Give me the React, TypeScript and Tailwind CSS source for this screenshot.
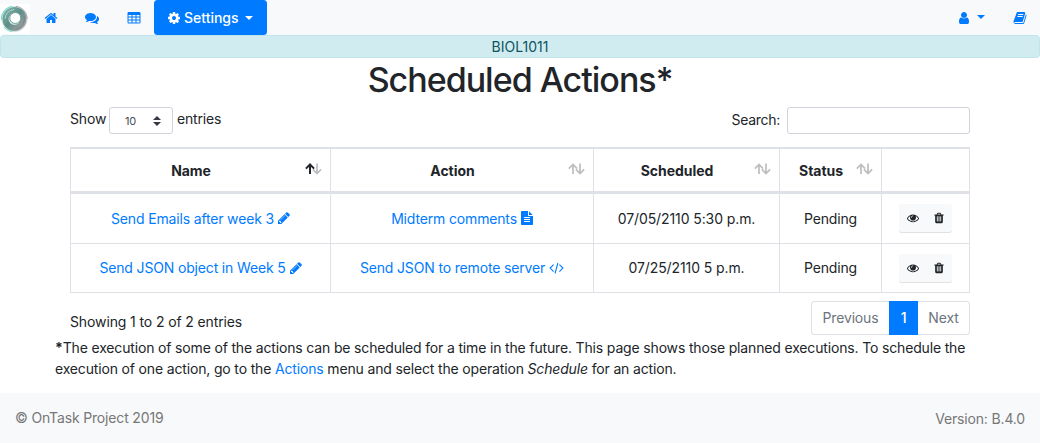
import type { ReactNode } from 'react';

const paths = {
  home: 'M1472 992v480q0 26-19 45t-45 19h-384v-384h-256v384h-384q-26 0-45-19t-19-45v-480q0-1 .5-3t.5-3l575-474 575 474q1 2 1 6zm223-69l-62 74q-8 9-21 11h-3q-13 0-21-7l-692-577-692 577q-12 8-24 7-13-2-21-11l-62-74q-8-10-7-23.500t11-21.500l719-599q32-26 76-26t76 26l244 204v-195q0-14 9-23t23-9h192q14 0 23 9t9 23v408l219 182q10 8 11 21.500t-7 23.500z',
  comments: 'M1408 768q0 139-94 257t-256.500 186.500-353.500 68.500q-86 0-176-16-124 88-278 128-36 9-86 16h-3q-11 0-20.500-8t-11.500-21q-1-3-1-6.500t.5-6.500 2-6l2.500-5 3.500-5.500 4-5 4.500-5 4-4.500q5-6 23-25t26-29.500 22.500-29 25-38.500 20.500-44q-124-72-195-177t-71-224q0-139 94-257t256.500-186.500 353.500-68.500 353.500 68.500 256.500 186.500 94 257zm384 256q0 120-71 224.500t-195 176.500q10 24 20.500 44t25 38.500 22.500 29 26 29.500 23 25q1 1 4 4.500t4.500 5 4 5 3.500 5.500l2.500 5 2 6 .5 6.500-1 6.500q-3 14-13 22t-22 7q-50-7-86-16-154-40-278-128-90 16-176 16-271 0-472-132 58 4 88 4 161 0 309-45t264-129q125-92 192-212t67-254q0-77-23-152 129 71 204 178t75 230z',
  cog: 'M1152 896q0-106-75-181t-181-75-181 75-75 181 75 181 181 75 181-75 75-181zm512-109v222q0 12-8 23t-20 13l-185 28q-19 54-39 91 35 50 107 138 10 12 10 25t-9 23q-27 37-99 108t-94 71q-12 0-26-9l-138-108q-44 23-91 38-16 136-29 186-7 28-36 28h-222q-14 0-24.500-8.500t-11.500-21.500l-28-184q-49-16-90-37l-141 107q-10 9-25 9-14 0-25-11-126-114-165-168-7-10-7-23 0-12 8-23 15-21 51-66.500t54-70.500q-27-50-41-99l-183-27q-13-2-21-12.500t-8-23.500v-222q0-12 8-23t19-13l186-28q14-46 39-92-40-57-107-138-10-12-10-24 0-10 9-23 26-36 98.500-107.500t94.500-71.500q13 0 26 10l138 107q44-23 91-38 16-136 29-186 7-28 36-28h222q14 0 24.500 8.500t11.500 21.500l28 184q49 16 90 37l142-107q9-9 24-9 13 0 25 10 129 119 165 170 7 8 7 22 0 12-8 23-15 21-51 66.500t-54 70.500q26 50 41 98l183 28q13 2 21 12.500t8 23.500z',
  table: 'M224 128H1568Q1728 128 1728 288V1440Q1728 1600 1568 1600H224Q64 1600 64 1440V288Q64 128 224 128zM192 512V704H576V512zM704 512V704H1088V512zM1216 512V704H1600V512zM192 832V1088H576V832zM704 832V1088H1088V832zM1216 832V1088H1600V832zM192 1216V1472H576V1216zM704 1216V1472H1088V1216zM1216 1216V1472H1600V1216z',
  user: 'M1536 1399q0 109-62.500 187t-150.500 78h-854q-88 0-150.500-78t-62.500-187q0-85 8.500-160.500t31.500-152 58.500-131 94-89 134.500-34.500q131 128 313 128t313-128q76 0 134.500 34.500t94 89 58.500 131 31.500 152 8.500 160.500zm-256-887q0 159-112.500 271.500t-271.500 112.500-271.500-112.500-112.500-271.500 112.500-271.500 271.500-112.500 271.500 112.500 112.500 271.500z',
  book: 'M1703 478q40 57 18 129l-275 906q-19 64-76.500 107.500t-122.500 43.500h-923q-77 0-148.500-53.500t-99.500-131.500q-24-67-2-127 0-4 3-27t4-37q1-8-3-21.500t-3-19.500q2-11 8-21t16.500-23.500 16.500-23.500q23-38 45-91.500t30-91.500q3-10 .5-30t-.5-28q3-11 17-28t17-23q21-36 42-92t25-90q1-9-2.500-32t.5-28q4-13 22-30.500t22-22.500q19-26 42.500-84.500t27.500-96.500q1-8-3-25.500t-2-26.500q2-8 9-18t18-23 17-21q8-12 16.500-30.500t15-35 16-36 19.500-32 26.500-23.500 36-11.500 47.500 5.500l-1 3q38-9 51-9h761q74 0 114 56t18 130l-274 906q-36 119-71.500 153.500t-128.500 34.500h-869q-27 0-38 15-11 16-1 43 24 70 144 70h923q29 0 56-15.500t35-41.500l300-987q7-22 5-57 38 15 59 43zm-1064 2q-4 13 2 22.500t20 9.500h608q13 0 25.500-9.500t16.500-22.500l21-64q4-13-2-22.500t-20-9.500h-608q-13 0-25.500 9.500t-16.500 22.500zm-83 256q-4 13 2 22.500t20 9.500h608q13 0 25.500-9.500t16.500-22.500l21-64q4-13-2-22.500t-20-9.500h-608q-13 0-25.500 9.500t-16.500 22.500z',
  pencil: 'M491 1536l91-91-235-235-91 91v107h128v128h107zm523-928q0-22-22-22-10 0-17 7l-542 542q-7 7-7 17 0 22 22 22 10 0 17-7l542-542q7-7 7-17zm-54-192l416 416-832 832h-416v-416zm683 96q0 53-37 90l-166 166-416-416 166-165q36-38 90-38 53 0 91 38l235 234q37 39 37 91z',
  file: 'M1596 476q14 14 28 36h-472v-472q22 14 36 28zm-476 164h544v1056q0 40-28 68t-68 28h-1344q-40 0-68-28t-28-68v-1600q0-40 28-68t68-28h800v544q0 40 28 68t68 28zm160 736v-64q0-14-9-23t-23-9h-704q-14 0-23 9t-9 23v64q0 14 9 23t23 9h704q14 0 23-9t9-23zm0-256v-64q0-14-9-23t-23-9h-704q-14 0-23 9t-9 23v64q0 14 9 23t23 9h704q14 0 23-9t9-23zm0-256v-64q0-14-9-23t-23-9h-704q-14 0-23 9t-9 23v64q0 14 9 23t23 9h704q14 0 23-9t9-23z',
  eye: 'M1664 960q-152-236-381-353 61 104 61 225 0 185-131.500 316.500t-316.500 131.500-316.500-131.500-131.500-316.500q0-121 61-225-229 117-381 353 133 205 333.500 326.500t434.500 121.500 434.500-121.500 333.500-326.500zm-720-384q0-20-14-34t-34-14q-125 0-214.500 89.500t-89.500 214.500q0 20 14 34t34 14 34-14 14-34q0-86 61-147t147-61q20 0 34-14t14-34zm848 384q0 34-20 69-140 230-376.500 368.500t-499.500 138.500-499.500-139-376.500-368q-20-35-20-69t20-69q140-229 376.500-368t499.500-139 499.500 139 376.500 368q20 35 20 69z',
  trash: 'M704 1376v-704q0-14-9-23t-23-9h-64q-14 0-23 9t-9 23v704q0 14 9 23t23 9h64q14 0 23-9t9-23zm256 0v-704q0-14-9-23t-23-9h-64q-14 0-23 9t-9 23v704q0 14 9 23t23 9h64q14 0 23-9t9-23zm256 0v-704q0-14-9-23t-23-9h-64q-14 0-23 9t-9 23v704q0 14 9 23t23 9h64q14 0 23-9t9-23zm-544-992h448l-48-117q-7-9-17-11h-317q-10 2-17 11zm928 32v64q0 14-9 23t-23 9h-96v948q0 83-47 143.500t-113 60.500h-832q-66 0-113-58.500t-47-141.500v-952h-96q-14 0-23-9t-9-23v-64q0-14 9-23t23-9h309l70-167q15-37 54-63t79-26h320q40 0 79 26t54 63l70 167h309q14 0 23 9t9 23z',
};

function Icon({ name, className = 'size-3.5' }: { name: keyof typeof paths; className?: string }) {
  return (
    <svg viewBox="0 0 1792 1792" fill="currentColor" fillRule="evenodd" className={`shrink-0 ${className}`}>
      <path d={paths[name]} />
    </svg>
  );
}

function CodeIcon() {
  return (
    <svg viewBox="0 0 15 14" fill="none" stroke="currentColor" strokeWidth="1.1" className="h-3.5 w-[15px] shrink-0">
      <path d="M4.6 3.6L1.1 7.1l3.500 3.500M10.400 3.600l3.500 3.500-3.500 3.500M8.900 2L6.100 12.300" />
    </svg>
  );
}

function Caret() {
  return (
    <svg viewBox="0 0 8 4" fill="currentColor" className="h-1 w-2">
      <path d="M0 0h8L4 4z" />
    </svg>
  );
}

function Logo() {
  return (
    <svg viewBox="0 0 30 30" className="mt-0.5 size-[30px]">
      <defs>
        <linearGradient id="ring" x1="0" y1="0" x2="1" y2="1">
          <stop offset="0" stopColor="#7fb0a9" />
          <stop offset="0.45" stopColor="#5c8f88" />
          <stop offset="1" stopColor="#a39fa3" />
        </linearGradient>
      </defs>
      <rect width="30" height="30" fill="#fff" />
      <circle cx="14.500" cy="15" r="13" fill="#cfe6e2" />
      <circle cx="14.500" cy="15" r="9" fill="none" stroke="url(#ring)" strokeWidth="6" />
      <path d="M1.500 16A13 13 0 0 1 12 2.300M4 23a13 13 0 0 0 8 4.700" fill="none" stroke="#7fe0cf" strokeWidth="1.200" />
      <path d="M16 2.200A13 13 0 0 1 27.300 15" fill="none" stroke="#a8a5a8" strokeWidth="1" />
      <path d="M5 15a10 10 0 0 1 9-9.500" fill="none" stroke="#b8cfcb" strokeWidth="1" />
      <path d="M24 12a10 10 0 0 1-8 13" fill="none" stroke="#77736f" strokeWidth="1" opacity="0.6" />
      <circle cx="15.300" cy="14" r="5.500" fill="#fff" stroke="#6fa39c" strokeWidth="1" />
    </svg>
  );
}

function SortArrows({ active = false }: { active?: boolean }) {
  return (
    <svg viewBox="0 0 17 12" fill="none" strokeWidth="1.700" className="h-3 w-[17px]">
      <path d="M12 0.500v10M7.900 6.400L12 10.500l4.100-4.100" stroke="#bcbec0" />
      <path d="M5 11V1.500M0.900 5.600L5 1.500l4.100 4.100" stroke={active ? '#212529' : '#bcbec0'} strokeWidth={active ? 2 : 1.7} />
    </svg>
  );
}

const columns = 'grid grid-cols-[260px_263px_186px_102px_88px] border-l border-[#dee2e6]';

function HeadCell({ children, active }: { children: ReactNode; active?: boolean }) {
  return (
    <div className="relative flex items-center justify-center border-r border-[#dee2e6] pr-[19px] font-bold tracking-[-0.05px]">
      {children}
      <span className="absolute top-[14px] right-2">
        <SortArrows active={active} />
      </span>
    </div>
  );
}

function Cell({ children, link = false }: { children: ReactNode; link?: boolean }) {
  return (
    <div className={`flex items-center justify-center gap-1 border-r border-[#dee2e6] pb-px ${link ? 'text-[#007bff]' : ''}`}>
      {children}
    </div>
  );
}

function Row({ name, action, icon, when, height }: { name: string; action: string; icon: ReactNode; when: string; height: string }) {
  return (
    <div className={`${columns} border-b ${height}`}>
      <Cell link>
        <span>{name}</span>
        <Icon name="pencil" className="-mr-px -ml-px size-3.5" />
      </Cell>
      <Cell link>
        <span>{action}</span>
        {icon}
      </Cell>
      <Cell>
        <span className="tracking-[-0.1px]">{when}</span>
      </Cell>
      <Cell>Pending</Cell>
      <Cell>
        <div className="flex h-7 w-[53px] items-center justify-between rounded-[3px] bg-[#f8f9fa] pr-[7px] pl-2 shadow-[0_1px_0_#dfe1e3]">
          <Icon name="eye" className="size-3" />
          <Icon name="trash" className="size-3" />
        </div>
      </Cell>
    </div>
  );
}

export default function App() {
  return (
    <div className="flex h-[443px] w-[1040px] flex-col overflow-hidden bg-white font-['Inter',sans-serif] text-[14px] leading-[21px] tracking-[-0.16px] text-[#212529]">
      <nav className="flex h-[35px] shrink-0 items-center bg-[#f8f9fa] text-[#007bff]">
        <Logo />
        <Icon name="home" className="ml-[14px] size-3.5" />
        <Icon name="comments" className="ml-[27px] size-3.5" />
        <Icon name="table" className="ml-[28px] size-3.5" />
        <button className="ml-[13px] flex h-[35px] w-[113px] items-center rounded-[3.5px] bg-[#007bff] pl-[13px] text-white">
          <Icon name="cog" />
          <span className="ml-[3px] font-medium tracking-normal">Settings</span>
          <span className="ml-1.5">
            <Caret />
          </span>
        </button>
        <div className="ml-auto flex items-center pr-[13px]">
          <Icon name="user" />
          <span className="mr-7 ml-[6px] mb-0.5">
            <Caret />
          </span>
          <Icon name="book" />
        </div>
      </nav>
      <div className="flex h-[23px] shrink-0 items-center justify-center rounded-[3.5px] border border-[#bee5eb] bg-[#d1ecf1] text-[#0c5460]">
        <span className="tracking-normal">BIOL1011</span>
      </div>
      <h1 className="h-[49px] text-center text-[34px] leading-[43px] font-medium tracking-[-1px]">Scheduled Actions*</h1>

      <main className="mx-[70px] flex w-[900px] flex-col">
        <div className="flex h-[27px] items-center justify-between">
          <div className="flex items-center">
            <span className="w-[35px] pb-1">Show</span>
            <div className="mr-1 ml-1 flex h-[27px] w-16 items-center justify-between rounded-[3px] border border-[#ced4da] pt-px pr-[11px] pl-[15px] text-[11px] text-[#495057]">
              <span>10</span>
              <svg viewBox="0 0 8 10" fill="#343a40" className="h-2.5 w-2">
                <path d="M0 4h8L4 0zM0 6h8L4 10z" />
              </svg>
            </div>
            <span className="pb-1">entries</span>
          </div>
          <label className="flex items-center gap-[7px]">
            <span className="pb-0.5 tracking-[-0.3px]">Search:</span>
            <input className="h-[27px] w-[183px] rounded-[3px] border border-[#ced4da] bg-white" />
          </label>
        </div>

        <div className="mt-[13px]">
          <div className={`${columns} h-[47px] border-t-2 border-b-[3px]`}>
            <HeadCell active>Name</HeadCell>
            <HeadCell>Action</HeadCell>
            <HeadCell>Scheduled</HeadCell>
            <HeadCell>Status</HeadCell>
            <div className="border-r border-[#dee2e6]" />
          </div>
          <Row name="Send Emails after week 3" action="Midterm comments" icon={<Icon name="file" className="-mr-px -ml-px size-3.5" />} when="07/05/2110 5:30 p.m." height="h-[50px]" />
          <Row name="Send JSON object in Week 5" action="Send JSON to remote server" icon={<CodeIcon />} when="07/25/2110 5 p.m." height="h-[49px]" />
        </div>

        <div className="mt-2 flex h-[34px] justify-between">
          <span className="pt-2.5 tracking-[-0.12px]">Showing 1 to 2 of 2 entries</span>
          <div className="flex w-[159px] items-stretch text-[#6c757d]">
            <div className="flex w-[78px] items-center justify-center rounded-l-[3.5px] border border-r-0 border-[#dee2e6] pb-0.5">Previous</div>
            <div className="flex w-[29px] items-center justify-center bg-[#007bff] pb-0.5 font-medium text-white">1</div>
            <div className="flex w-[52px] items-center justify-center rounded-r-[3.5px] border border-l-0 border-[#dee2e6] pb-0.5">Next</div>
          </div>
        </div>
      </main>

      <p className="mt-0.5 ml-[55px] whitespace-nowrap">
        <b>*</b>The execution of some of the actions can be scheduled for a time in the future. This page shows those planned executions. To schedule the
        <br />
        execution of one action, go to the <a className="text-[#007bff]">Actions</a> menu and select the operation <i>Schedule</i> for an action.
      </p>

      <footer className="mt-auto flex h-[50px] shrink-0 items-center justify-between bg-[#f8f9fa] px-[15px] text-[#777]">
        <span className="pb-px">© OnTask Project 2019</span>
        <span className="pt-px">Version: B.4.0</span>
      </footer>
    </div>
  );
}
